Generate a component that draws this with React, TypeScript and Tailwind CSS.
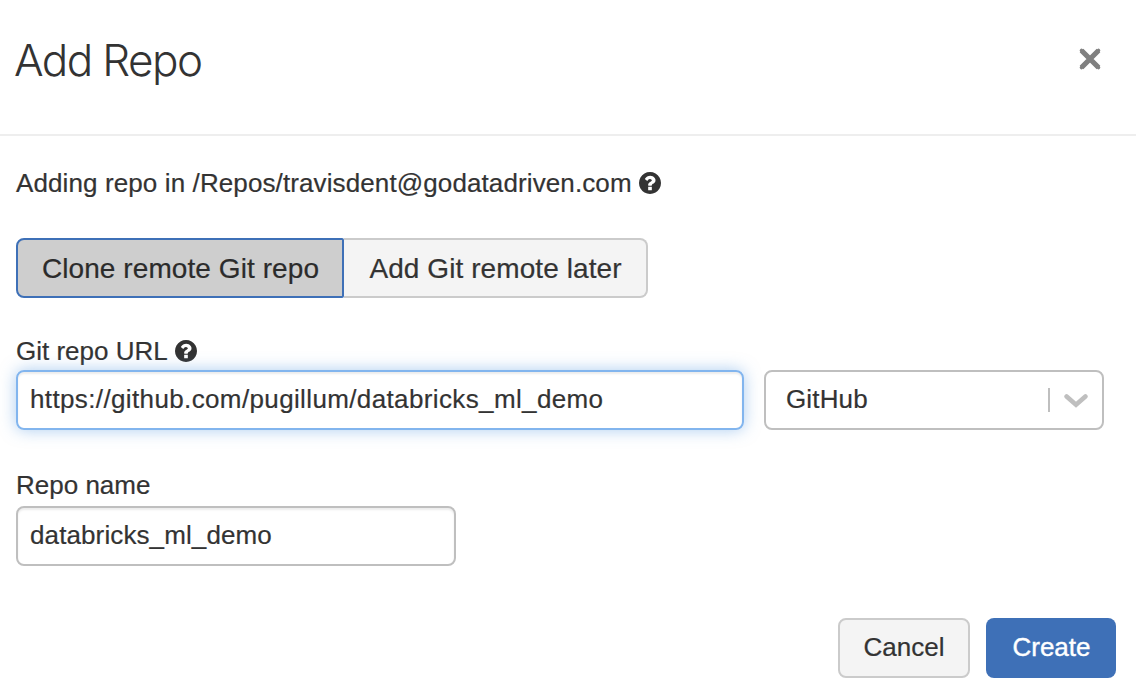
function HelpIcon() {
  return (
    <svg viewBox="128 128 1536 1536" className="size-[22px] shrink-0" fill="currentColor" aria-hidden="true">
      <path d="M1024 1376v-192q0-14-9-23t-23-9h-192q-14 0-23 9t-9 23v192q0 14 9 23t23 9h192q14 0 23-9t9-23zm256-672q0-88-55.5-163t-138.5-116-170.5-41q-243 0-371 213-15 24 8 42l132 100q7 6 19 6 16 0 25-12 53-68 86-92 34-24 86-24 48 0 85.5 26t37.5 59q0 38-20 61t-68 45q-63 28-115.5 86.5t-52.5 125.5v36q0 14 9 23t23 9h192q14 0 23-9t9-23q0-19 21.5-49.5t54.5-49.5q32-18 49-28.5t46-35 44.5-48 28-60.5 12.5-81zm384 192q0 209-103 385.5t-279.5 279.5-385.5 103-385.5-103-279.5-279.5-103-385.5 103-385.5 279.5-279.5 385.5-103 385.5 103 279.5 279.5 103 385.5z" />
    </svg>
  );
}

function CloseIcon() {
  return (
    <svg viewBox="0 0 24 24" className="size-6" fill="none" stroke="currentColor" aria-hidden="true">
      <path d="M3.5 3.5 20.5 20.5M20.5 3.5 3.5 20.5" strokeWidth="5.2" />
      <path d="M3.5 3.5 20.5 20.5M20.5 3.5 3.5 20.5" strokeWidth="3.6" strokeLinecap="round" />
    </svg>
  );
}

function ChevronIcon() {
  return (
    <svg viewBox="0 0 24 16" className="h-4 w-6" fill="none" stroke="currentColor" aria-hidden="true">
      <path d="M2.6 4.5 12 12.8 21.4 4.5" strokeWidth="4.6" strokeLinecap="round" />
    </svg>
  );
}

export default function App() {
  return (
    <div className="flex h-[698px] w-[1136px] flex-col overflow-hidden bg-white font-['Liberation_Sans',Arial,sans-serif] text-[26px] leading-[40px] whitespace-nowrap text-[#333] [-webkit-text-stroke:0.2px]">
      <header className="flex h-[136px] shrink-0 items-start justify-between border-b-2 border-[#eee] pr-[34px] pl-[14px]">
        <h1 className="mt-[30px] font-['Inter',sans-serif] text-[44px] leading-[60px] font-light tracking-[-1.6px] [-webkit-text-stroke:0px]">Add Repo</h1>
        <button className="mt-[47px] text-[#808080]" aria-label="Close">
          <CloseIcon />
        </button>
      </header>

      <main className="flex flex-col pt-[27px] pr-8 pl-4">
        <div className="flex h-10 items-center gap-[7px]">
          <span className="tracking-[0.11px]">Adding repo in /Repos/travisdent@godatadriven.com</span>
          <HelpIcon />
        </div>

        <div className="mt-[35px] flex h-[60px] text-[28px] tracking-[0.08px]">
          <button className="w-[328px] rounded-l-lg rounded-r-[2px] border-2 border-[#3e70b7] bg-[#cecece] pt-0.5 pl-px text-[#2b2b2b]">
            Clone remote Git repo
          </button>
          <button className="w-[304px] rounded-r-lg border-2 border-l-0 border-[#cbcbcb] bg-[#f4f4f4] pt-0.5 pl-px">
            Add Git remote later
          </button>
        </div>

        <div className="mt-[33px] flex h-10 items-center gap-[7px]">
          <label htmlFor="url">Git repo URL</label>
          <HelpIcon />
        </div>
        <div className="-mt-px flex gap-5">
          <input
            id="url"
            readOnly
            value="https://github.com/pugillum/databricks_ml_demo"
            className="h-[60px] w-[728px] rounded-lg border-2 border-[#82b5ee] px-3 pb-0.5 tracking-[0.37px] shadow-[inset_0_2px_2px_rgba(0,0,0,0.075),0_0_16px_rgba(90,155,225,0.5)] outline-none"
          />
          <div className="flex h-[60px] w-[340px] items-center rounded-lg border-2 border-[#bfbfbf] pr-[14px] pl-5">
            <span className="flex-1 pb-0.5 tracking-[0.15px]">GitHub</span>
            <span className="h-6 w-0.5 bg-[#bfbfbf]" />
            <span className="ml-[14px] text-[#bfbfbf]">
              <ChevronIcon />
            </span>
          </div>
        </div>

        <label htmlFor="name" className="mt-[35px] block h-10">Repo name</label>
        <input
          id="name"
          readOnly
          value="databricks_ml_demo"
          className="mt-px h-[60px] w-[440px] rounded-lg border-2 border-[#bfbfbf] px-3 pb-0.5 tracking-[0.11px] shadow-[inset_0_2px_2px_rgba(0,0,0,0.075)] outline-none"
        />
      </main>

      <footer className="mt-[52px] flex h-[60px] justify-end gap-4 pr-5">
        <button className="w-[132px] rounded-lg border-2 border-[#cbcbcb] bg-[#f4f4f4] pb-0.5">Cancel</button>
        <button className="w-[130px] rounded-lg bg-[#3e70b7] pb-0.5 pl-px text-white [-webkit-text-stroke:0.4px]">Create</button>
      </footer>
    </div>
  );
}
